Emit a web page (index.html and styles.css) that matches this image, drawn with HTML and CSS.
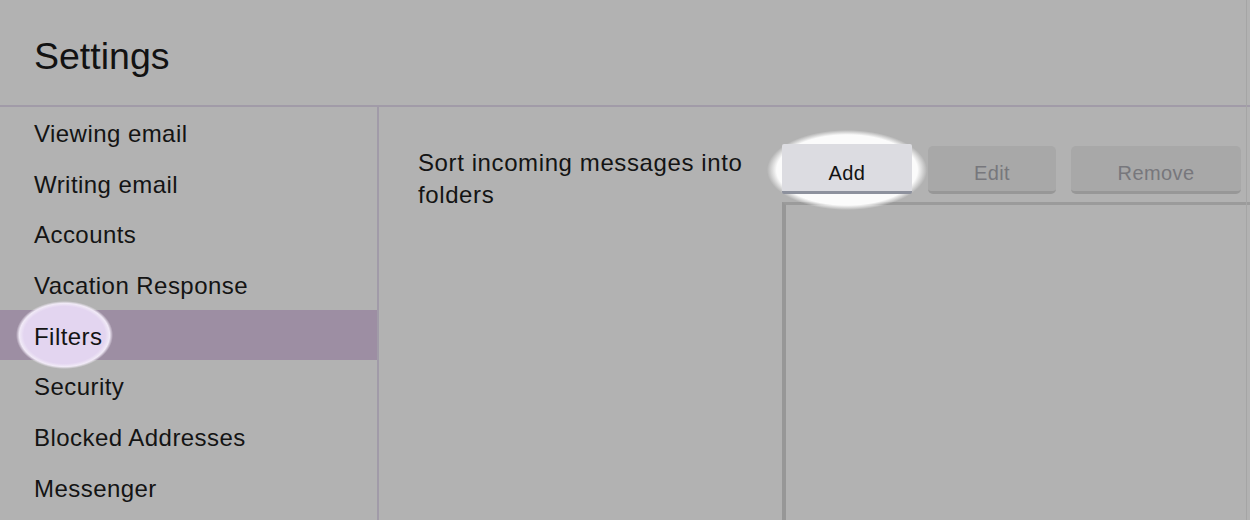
FILE: index.html
```html
<!DOCTYPE html>
<html lang="en">
<head>
<meta charset="utf-8">
<title>Settings</title>
<link rel="stylesheet" href="styles.css">
</head>
<body>
<div class="app">
  <header class="topbar">
    <h1 class="title">Settings</h1>
  </header>
  <div class="main">
    <nav class="sidebar">
      <ul class="menu">
        <li class="menu-item">Viewing email</li>
        <li class="menu-item">Writing email</li>
        <li class="menu-item">Accounts</li>
        <li class="menu-item">Vacation Response</li>
        <li class="menu-item is-active"><span class="spot spot-filters"></span><span class="label">Filters</span></li>
        <li class="menu-item">Security</li>
        <li class="menu-item">Blocked Addresses</li>
        <li class="menu-item">Messenger</li>
      </ul>
    </nav>
    <section class="content">
      <p class="desc">Sort incoming messages into folders</p>
      <div class="filters">
        <div class="toolbar">
          <span class="spot spot-add"></span>
          <button class="btn btn-primary">Add</button>
          <button class="btn btn-disabled btn-edit">Edit</button>
          <button class="btn btn-disabled btn-remove">Remove</button>
        </div>
        <div class="list"></div>
      </div>
    </section>
  </div>
</div>
</body>
</html>
```

FILE: styles.css
```css
* {
  box-sizing: border-box;
}

html, body {
  margin: 0;
  padding: 0;
  background: #b2b2b2;
}

body {
  font-family: "Liberation Sans", Arial, Helvetica, sans-serif;
  color: #161616;
  width: 1250px;
  height: 520px;
  overflow: hidden;
}

.app {
  display: flex;
  flex-direction: column;
  height: 520px;
  width: 1250px;
  position: relative;
}

.app::after {
  content: "";
  position: absolute;
  top: 0;
  bottom: 0;
  left: 1246px;
  width: 1px;
  background: #a5a5a5;
}

.topbar {
  height: 107px;
  border-bottom: 2px solid #a19ba8;
  padding: 38px 0 0 34px;
  flex: none;
}

.title {
  margin: 0;
  font-weight: normal;
  font-size: 37.5px;
  line-height: 37px;
  color: #121212;
}

.main {
  flex: 1;
  display: flex;
  min-height: 0;
}

.sidebar {
  width: 379px;
  flex: none;
  border-right: 2px solid #a19ba8;
}

.menu {
  list-style: none;
  margin: 0;
  padding: 0;
}

.menu-item {
  position: relative;
  height: 50.7px;
  padding: 4px 0 0 34px;
  line-height: 46.7px;
  font-size: 24px;
  letter-spacing: 0.45px;
  color: #141414;
  white-space: nowrap;
}

.menu-item.is-active {
  background: #9d8ea3;
}

.label {
  position: relative;
}

.spot {
  position: absolute;
  pointer-events: none;
}

.spot-filters {
  left: 16px;
  top: -9px;
  width: 97px;
  height: 68px;
  background: radial-gradient(ellipse closest-side, #e3d5f0 84%, #f1eaf7 93%, rgba(241, 234, 247, 0) 100%);
}

.content {
  flex: 1;
  display: grid;
  grid-template-columns: 364px 1fr;
  padding: 37px 0 0 39px;
  min-width: 0;
}

.desc {
  margin: 3px 0 0;
  font-size: 24px;
  line-height: 32px;
  letter-spacing: 0.6px;
  color: #141414;
}

.filters {
  display: flex;
  flex-direction: column;
  min-height: 0;
}

.toolbar {
  position: relative;
  display: flex;
  align-items: flex-end;
  height: 50px;
}

.spot-add {
  left: -15px;
  top: -14px;
  width: 160px;
  height: 80px;
  background: radial-gradient(ellipse closest-side, #fbfbfb 88%, rgba(251, 251, 251, 0) 100%);
}

.btn {
  position: relative;
  border: none;
  border-radius: 5px;
  font-family: "Liberation Sans", Arial, Helvetica, sans-serif;
  font-size: 20px;
  letter-spacing: 0.4px;
  padding: 11px 0 0;
  margin: 0;
}

.btn-primary {
  width: 130px;
  height: 50px;
  background: #dcdce1;
  border-bottom: 3px solid #8d919d;
  border-radius: 2px;
  color: #121212;
}

.btn-disabled {
  height: 48px;
  padding-top: 9px;
  background: #a8a8a8;
  border-bottom: 3px solid #979797;
  color: #77777c;
}

.btn-edit {
  width: 128px;
  margin-left: 16px;
}

.btn-remove {
  width: 170px;
  margin-left: 15px;
}

.list {
  flex: 1;
  margin-top: 8px;
  border-top: 3px solid #9b9b9b;
  border-left: 4px solid #979797;
  background: #b2b2b2;
}
```
